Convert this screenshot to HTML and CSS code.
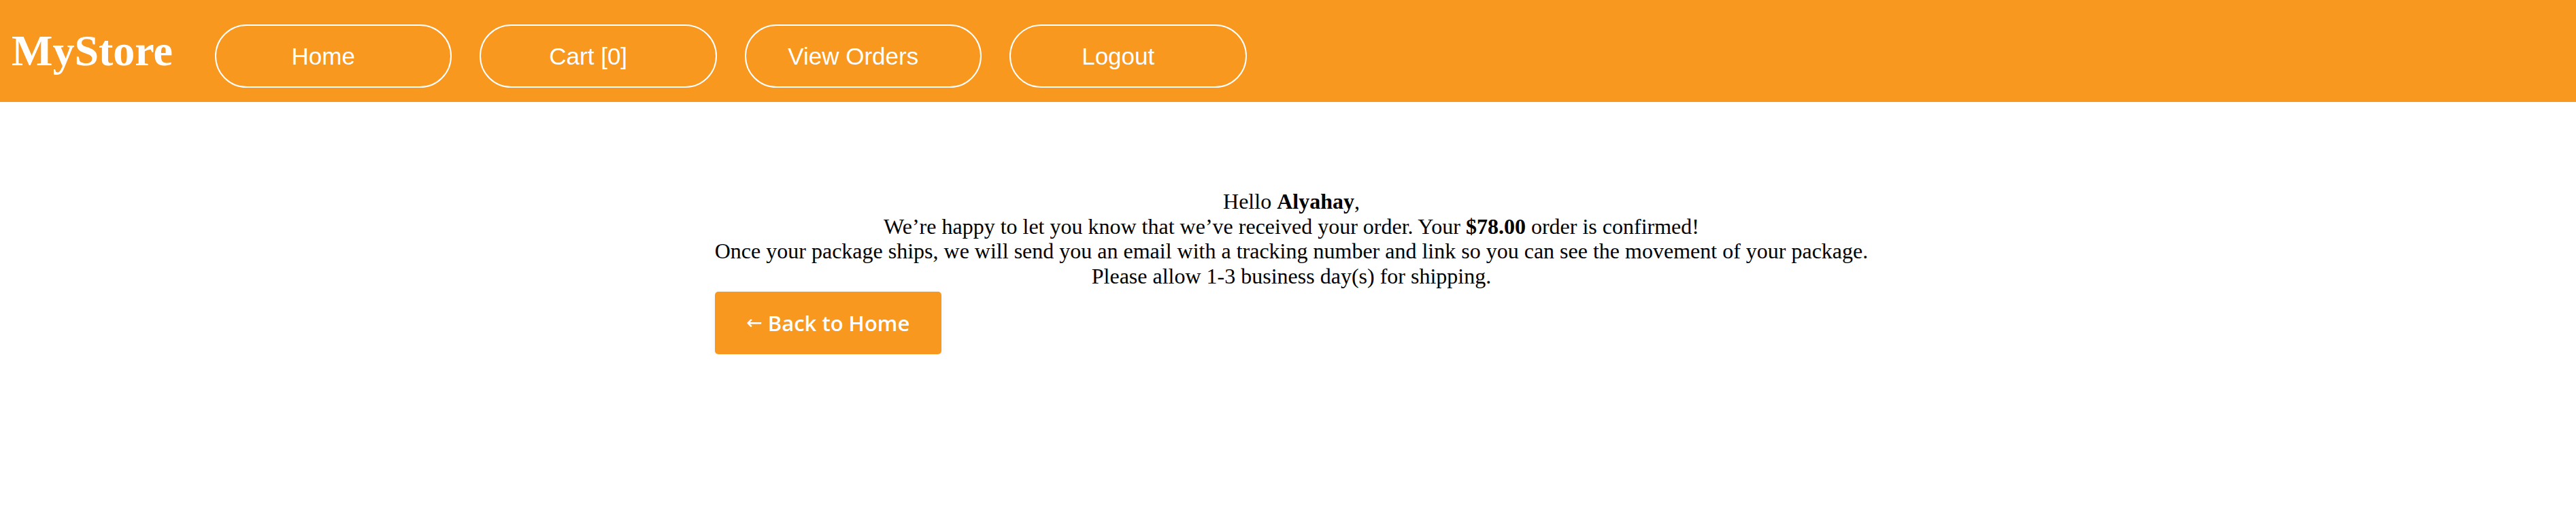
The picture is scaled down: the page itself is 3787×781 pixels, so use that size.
FILE: index.html
```html
<!DOCTYPE html>
<html lang="en">
<head>
<meta charset="utf-8">
<title>MyStore - Order Confirmed</title>
<link rel="stylesheet" href="styles.css">
</head>
<body>
<header class="topbar">
  <div class="brand">MyStore</div>
  <nav class="nav">
    <a class="nav-link" href="#">Home</a>
    <a class="nav-link" href="#">Cart [0]</a>
    <a class="nav-link" href="#">View Orders</a>
    <a class="nav-link" href="#">Logout</a>
  </nav>
</header>
<main class="content">
  <div class="confirm">
    <div class="message">
      Hello <b>Alyahay</b>,<br>
      We’re happy to let you know that we’ve received your order. Your <b>$78.00</b> order is confirmed!<br>
      Once your package ships, we will send you an email with a tracking number and link so you can see the movement of your package.<br>
      Please allow 1-3 business day(s) for shipping.
    </div>
    <a class="back-btn" href="#"><span class="arrow">←</span> Back to Home</a>
  </div>
</main>
</body>
</html>
```
FILE: styles.css
```css
html, body {
  margin: 0;
  padding: 0;
  background: #ffffff;
}
body {
  font-family: "Liberation Serif", "Times New Roman", serif;
  color: #000;
}
.topbar {
  display: flex;
  align-items: center;
  height: 150px;
  background: #f8981f;
  padding-left: 17px;
  box-sizing: border-box;
}
.brand {
  font-family: "Liberation Serif", "Times New Roman", serif;
  font-weight: bold;
  font-size: 64px;
  line-height: 1;
  color: #ffffff;
  margin-right: 62px;
}
.nav {
  display: flex;
  gap: 41px;
  margin-top: 15px;
}
.nav-link {
  display: flex;
  align-items: center;
  justify-content: center;
  width: 348.5px;
  height: 93px;
  box-sizing: border-box;
  padding-right: 30px;
  border: 2px solid #ffffff;
  border-radius: 47px;
  color: #ffffff;
  text-decoration: none;
  font-family: "Liberation Sans", Arial, sans-serif;
  font-size: 35px;
}
.content {
  display: flex;
  justify-content: center;
  padding: 128px 0 0 10px;
}
.confirm {
  display: flex;
  flex-direction: column;
  align-items: flex-start;
}
.message {
  font-size: 32px;
  line-height: 36.7px;
  text-align: center;
}
.back-btn {
  margin-top: 4px;
  display: flex;
  align-items: center;
  justify-content: center;
  width: 333px;
  height: 92px;
  background: #f8981f;
  color: #ffffff;
  border-radius: 5px;
  text-decoration: none;
  font-family: "Open Sans", "Noto Sans", sans-serif;
  font-weight: 600;
  font-size: 31px;
  white-space: pre;
  box-shadow: 0 3px 8px rgba(0, 0, 0, 0.06);
}
.arrow {
  font-family: "DejaVu Sans", sans-serif;
  font-weight: normal;
  font-size: 28px;
}
```
